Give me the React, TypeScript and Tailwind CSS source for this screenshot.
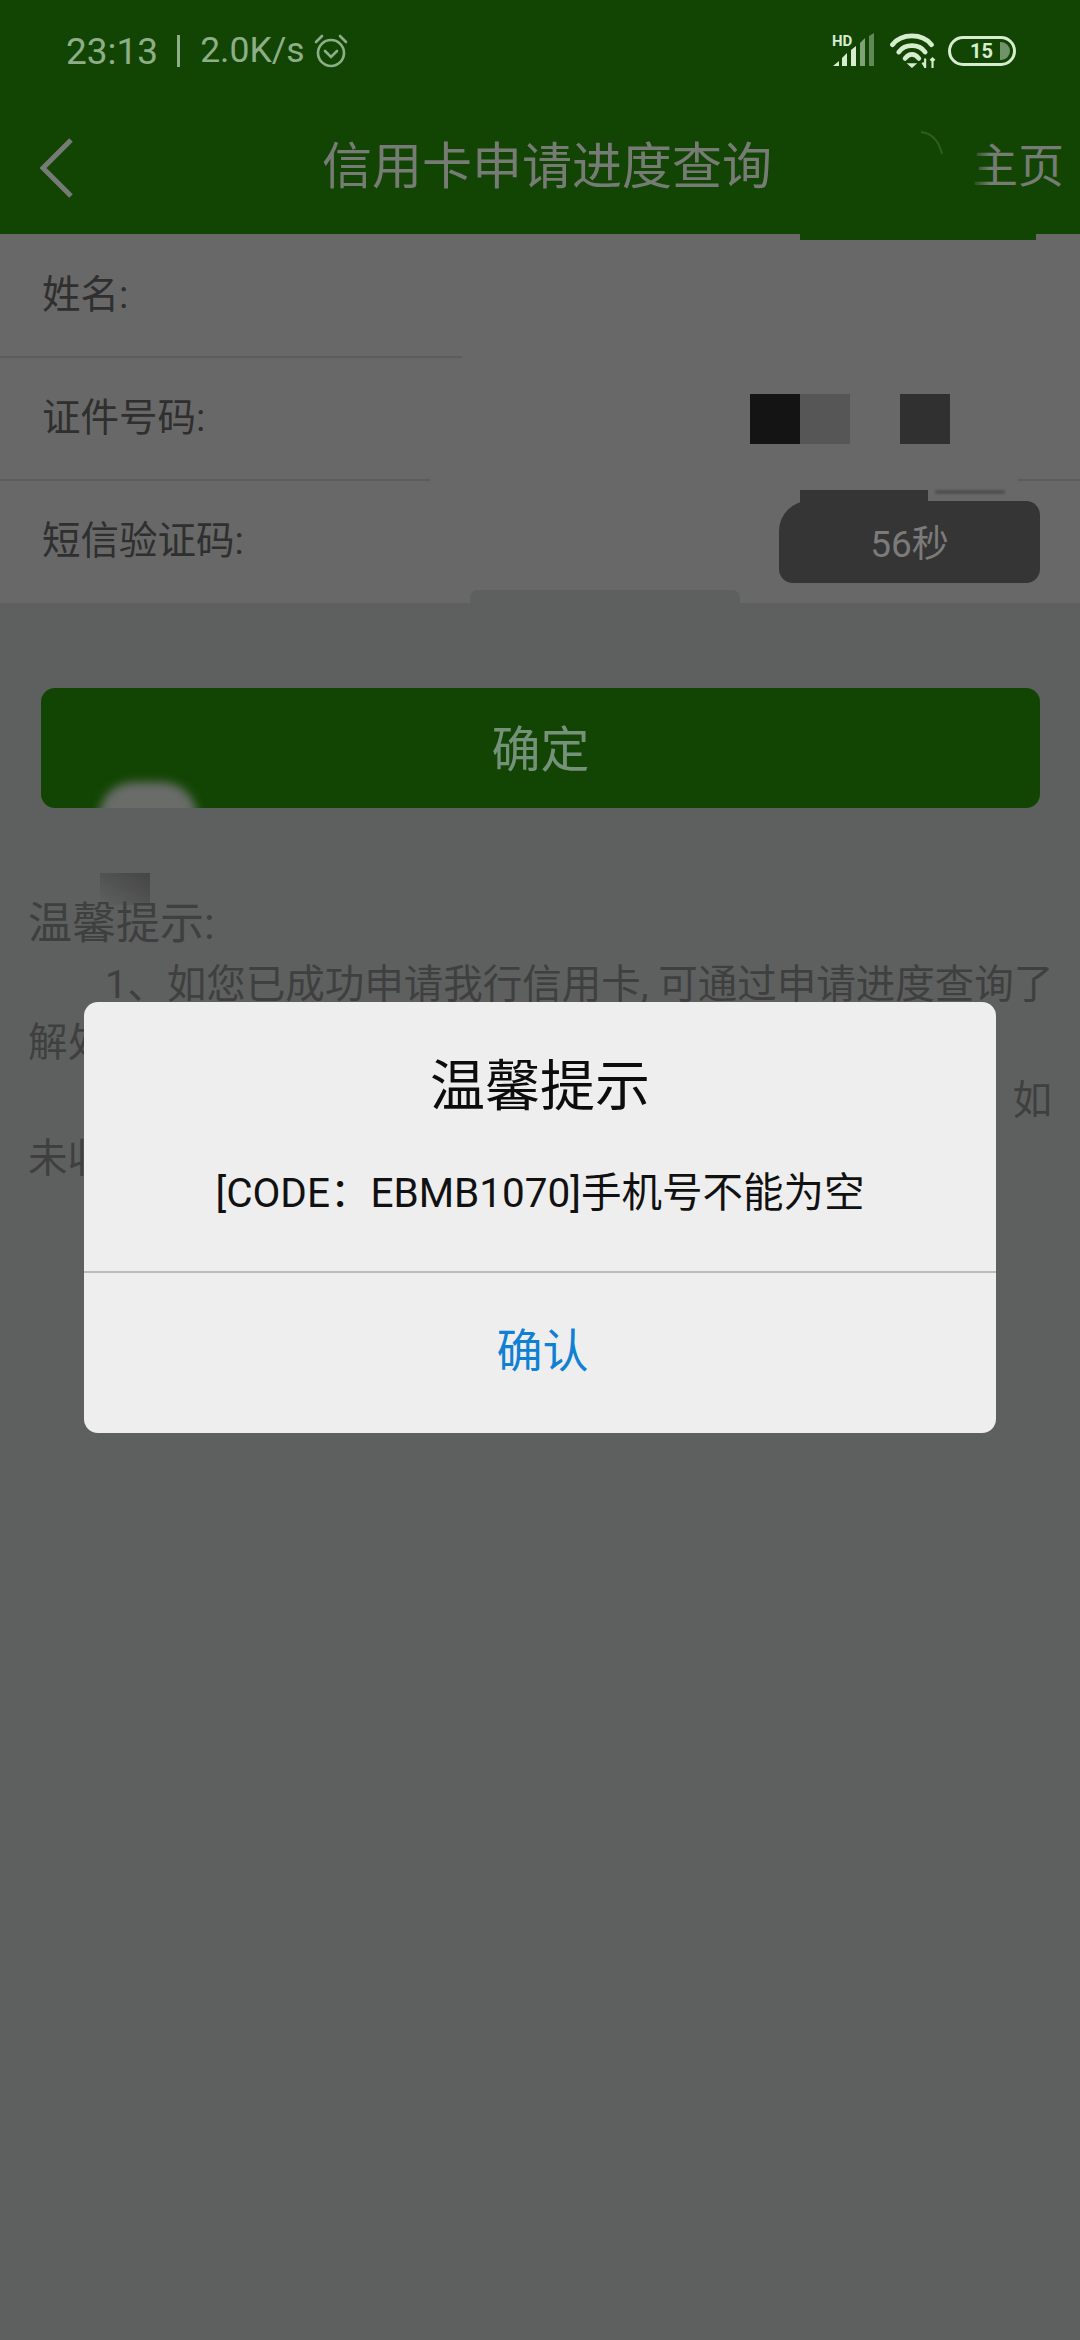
const cjk = "font-['Roboto','Noto_Sans_CJK_SC',sans-serif]";

function SignalIcon() {
  return (
    <svg width="44" height="36" viewBox="0 0 44 36">
      <text x="0" y="13" fontSize="15" fontWeight="700" fill="#d8ecd0" fontFamily="Roboto">HD</text>
      <path d="M1 33 L7 28 V33Z" fill="#d8ecd0" />
      <path d="M10 25 L15 20 V33 H10Z" fill="#d8ecd0" />
      <path d="M19 17 L24 13 V33 H19Z" fill="#d8ecd0" />
      <path d="M28 10 L33 5 V33 H28Z" fill="#7fa377" />
      <path d="M37 3 L42 0 V33 H37Z" fill="#5f8a55" />
    </svg>
  );
}

function WifiIcon() {
  return (
    <svg width="46" height="38" viewBox="0 0 43 36" fill="none" stroke="#d8ecd0" strokeWidth="4.500" strokeLinecap="round">
      <path d="M2 12 C11 1 30 1 39 12" />
      <path d="M8 19 C14 11 27 11 33 19" />
      <path d="M14 25 C18 20 23 20 27 25" />
      <path d="M20.500 34 L15.500 29.500 H25.500Z" fill="#d8ecd0" stroke="none" />
      <path d="M33 25 V34 M30.500 29 L33 33 M40 25 V34 M38 27 L40 25 L42 27" strokeWidth="2" strokeLinecap="butt" />
    </svg>
  );
}

function BatteryIcon() {
  return (
    <div className="flex h-[30px] w-[68px] items-center justify-between rounded-[15px] border-[3px] border-[#d8ecd0] pl-[19px] pr-[3px]">
      <span className="font-['Roboto',sans-serif] text-[20px] font-bold leading-none text-[#d8ecd0]">15</span>
      <span className="h-[18px] w-[10px] rounded-r-[9px] bg-[#6f946a]" />
    </div>
  );
}

function AlarmIcon() {
  return (
    <svg width="36" height="36" viewBox="0 0 36 36" fill="none" stroke="#8eae88" strokeWidth="2.600" strokeLinecap="round">
      <circle cx="18" cy="20" r="13" />
      <path d="M12 18 L18 24 L24 18" />
      <path d="M3 9 L9 3 M33 9 L27 3" />
    </svg>
  );
}

function FormRow({ label, children }: { label: string; children?: React.ReactNode }) {
  return (
    <div className="flex h-[123px] items-center justify-between pl-[42px] pr-[40px] text-[#2f2f2f]">
      <span className="text-[38.5px] leading-none">{label}</span>
      {children}
    </div>
  );
}

export default function App() {
  return (
    <div className={`relative flex h-[2340px] w-[1080px] flex-col overflow-hidden bg-[#5e605f] ${cjk}`}>
      <header className="h-[234px] bg-[#124503]">
        <div className="flex h-[102px] items-center justify-between pl-[66px] pr-[64px]">
          <div className="flex items-center text-[37px] leading-none text-[#8eae88]">
            <span>23:13</span>
            <span className="ml-[19px] mr-[20px] h-[32px] w-[3px] bg-[#8eae88]" />
            <span className="mr-[8px] text-[35.5px]">2.0K/s</span>
            <AlarmIcon />
          </div>
          <div className="flex items-center">
            <SignalIcon />
            <div className="ml-[14px] mr-[12px]">
              <WifiIcon />
            </div>
            <BatteryIcon />
          </div>
        </div>
        <div className="relative flex h-[132px] items-center justify-center">
          <svg className="absolute left-[38px] top-[36px]" width="36" height="60" viewBox="0 0 36 60" fill="none" stroke="#777b75" strokeWidth="5">
            <path d="M33 2 L5 30 L33 58" />
          </svg>
          <h1 className="mb-[2px] ml-[14px] text-[50px] font-normal leading-none text-[#777b75]">信用卡申请进度查询</h1>
          <span className="absolute right-[16px] top-[41px] text-[46px] leading-none text-[#777b75]">主页</span>
          {/* smudge over the 主 glyph and the arc left of it */}
          <div className="absolute left-[950px] top-[33px] h-[70px] w-[40px] bg-gradient-to-r from-[#124503] from-50% to-transparent" />
          <svg className="absolute left-[918px] top-[28px]" width="30" height="36" viewBox="0 0 30 36" fill="none" stroke="#2f5e24" strokeWidth="2">
            <path d="M3 2 C14 3 21 12 24 24" />
          </svg>
        </div>
      </header>

      <section className="relative h-[369px] bg-[#686868]">
        <FormRow label="姓名:" />
        <FormRow label="证件号码:">
          <div className="flex">
            <span className="h-[50px] w-[50px] bg-[#141414]" />
            <span className="h-[50px] w-[50px] bg-[#565656]" />
            <span className="h-[50px] w-[50px]" />
            <span className="h-[50px] w-[50px] bg-[#303030]" />
            <span className="w-[90px]" />
          </div>
        </FormRow>
        <FormRow label="短信验证码:">
          <div className="flex h-[82px] w-[261px] items-center justify-center rounded-[14px] rounded-tl-[30px] bg-[#353535] pt-[5px] text-[37px] leading-none text-[#7b7b7b]">
            56秒
          </div>
        </FormRow>
        {/* divider lines, interrupted where the picture was retouched */}
        <div className="absolute left-0 top-[122px] h-[2px] w-[462px] bg-[#5c5c5c]" />
        <div className="absolute left-0 top-[245px] h-[2px] w-[430px] bg-[#5c5c5c]" />
        <div className="absolute right-0 top-[245px] h-[2px] w-[62px] bg-[#5c5c5c]" />
        {/* retouch patches */}
        <div className="absolute left-[800px] top-0 h-[6px] w-[236px] bg-[#124503]" />
        <div className="absolute left-[800px] top-[256px] h-[14px] w-[128px] bg-[#353535]" />
        <div className="absolute left-[935px] top-[256px] h-[4px] w-[70px] rounded-full bg-[#505050] blur-[1px]" />
        <div className="absolute bottom-0 left-[470px] h-[13px] w-[270px] rounded-t-[8px] bg-[#5e605f]" />
      </section>

      <div className="pl-[41px] pr-[40px] pt-[85px]">
        <div className="relative flex h-[120px] items-center justify-center overflow-hidden rounded-[14px] bg-[#124503] pt-[4px] text-[49px] leading-none text-[#76917a]">
          确定
          <div className="absolute left-[58px] top-[94px] h-[70px] w-[98px] rounded-full bg-[#696c69] blur-[5px]" />
        </div>
      </div>

      <div className="relative px-[28px] pt-[85px] text-[39.5px] leading-[58px] text-[#3f3f3f]">
        <div className="absolute left-[100px] top-[65px] h-[32px] w-[50px] bg-gradient-to-bl from-[#444544] to-transparent" />
        <p className="relative text-[44px] leading-[63px]">温馨提示:</p>
        <p className="indent-[77px] whitespace-nowrap">1、如您已成功申请我行信用卡, 可通过申请进度查询了</p>
        <p>解处</p>
        <p className="text-right">如</p>
        <p>未收</p>
      </div>

      <div className="absolute left-[84px] top-[1002px] flex h-[431px] w-[912px] flex-col rounded-[14px] bg-[#eeeeee]">
        <div className="flex h-[271px] flex-col items-center border-b-2 border-[#bcbcbc]">
          <h2 className="pt-[57px] text-[55px] font-normal leading-none text-[#0c0c0c]">温馨提示</h2>
          <p className="pt-[59px] text-[40.5px] leading-none text-[#111111]">[CODE：EBMB1070]手机号不能为空</p>
        </div>
        <button className="flex flex-1 items-center justify-center pb-[5px] pl-[5px] text-[46px] leading-none text-[#0f80d4]">确认</button>
      </div>
    </div>
  );
}
